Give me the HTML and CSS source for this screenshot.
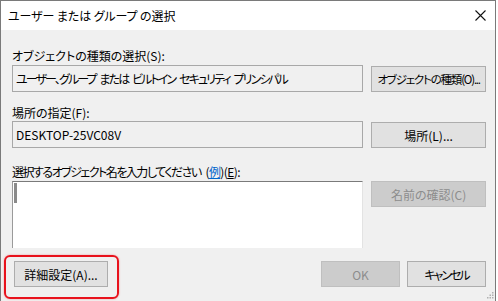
FILE: index.html
```html
<!DOCTYPE html>
<html>
  <head>
    <title>ユーザー または グループ の選択</title>
    <link rel="stylesheet" href="styles.css">
  </head>
  <body>
    <div class="window">
      <div class="titlebar">
        <span class="title">ユーザー または グループ の選択</span>
        <svg class="close" width="11" height="11" viewBox="0 0 11 11">
          <path d="M0.5 0.5 L10.5 10.5 M10.5 0.5 L0.5 10.5" stroke="#111" stroke-width="1.1" fill="none" />
        </svg>
      </div>

      <div class="content">
        <div class="label label-first">オブジェクトの種類の選択(S):</div>
        <div class="row">
          <div class="field field-kana">ユーザー、グループ または ビルトイン セキュリティ プリンシパル</div>
          <button class="btn btn-tight">オブジェクトの種類(O)...</button>
        </div>

        <div class="label">場所の指定(F):</div>
        <div class="row">
          <div class="field">DESKTOP-25VC08V</div>
          <button class="btn">場所(L)...</button>
        </div>

        <div class="label label-third"><span class="label-kana">選択するオブジェクト名を入力してください</span> <span class="label-tail">(<span class="link">例</span>)(<u>E</u>):</span></div>
        <div class="row row-top">
          <div class="textbox"><span class="caret"></span></div>
          <button class="btn" disabled>名前の確認(C)</button>
        </div>

        <div class="footer">
          <button class="btn btn-small">詳細設定(A)...</button>
          <div class="footer-right">
            <button class="btn btn-ok" disabled>OK</button>
            <button class="btn btn-ok btn-kana">キャンセル</button>
          </div>
        </div>
      </div>

      <div class="highlight"></div>
      <svg class="grip" width="7" height="7" viewBox="0 0 7 7">
        <rect x="5" y="0" width="1.5" height="1.5" fill="#b0b0b0" />
        <rect x="2.5" y="2.5" width="1.5" height="1.5" fill="#b0b0b0" />
        <rect x="5" y="2.5" width="1.5" height="1.5" fill="#b0b0b0" />
        <rect x="0" y="5" width="1.5" height="1.5" fill="#b0b0b0" />
        <rect x="2.5" y="5" width="1.5" height="1.5" fill="#b0b0b0" />
        <rect x="5" y="5" width="1.5" height="1.5" fill="#b0b0b0" />
      </svg>
    </div>
  </body>
</html>
```

FILE: styles.css
```css
body {
  margin: 0;
  background-color: #ffffff;
  font-family: "Noto Sans CJK JP", "Noto Sans", sans-serif;
  font-size: 12px;
  font-feature-settings: "palt";
  color: #000;
}
.window {
  position: relative;
  width: 494px;
  height: 300px;
  border: 1px solid #7a7a7a;
  border-bottom: none;
  background-color: #f0f0f0;
}
.titlebar {
  height: 29px;
  background-color: #fff;
  display: flex;
  align-items: center;
  justify-content: space-between;
  padding: 0 9px 0 7px;
}
.title {
  letter-spacing: -0.1px;
}
.content {
  padding: 0 9px 0 11px;
}
.label {
  height: 17px;
  line-height: 17px;
  margin-top: 12px;
}
.label-first {
  margin-top: 17px;
  margin-bottom: 1px;
}
.label-third {
  margin-top: 15px;
  margin-bottom: 1px;
  word-spacing: 2px;
}
.label-kana {
  letter-spacing: -1.5px;
}
.label-tail {
  letter-spacing: -0.6px;
}
.link {
  color: #0066cc;
  text-decoration: underline;
}
.row {
  display: flex;
  align-items: flex-end;
  gap: 8px;
}
.row-top {
  align-items: flex-start;
}
.field {
  box-sizing: border-box;
  width: 352px;
  height: 27px;
  line-height: 25px;
  padding-left: 3px;
  border: 1px solid #a8a8a8;
  background-color: #f0f0f0;
  white-space: nowrap;
  overflow: hidden;
}
.field-kana {
  letter-spacing: -1.9px;
  word-spacing: 3px;
}
.btn {
  box-sizing: border-box;
  width: 115px;
  height: 26px;
  padding: 0;
  border: 1px solid #adadad;
  background-color: #e1e1e1;
  font-family: inherit;
  font-size: 12px;
  font-feature-settings: "palt";
  color: #000;
  white-space: nowrap;
}
.btn:disabled {
  background-color: #cccccc;
  border-color: #bfbfbf;
  color: #8d8d8d;
}
.btn-tight {
  font-size: 11.5px;
  letter-spacing: -1.2px;
}
.btn-kana {
  letter-spacing: -2px;
}
.textbox {
  position: relative;
  box-sizing: border-box;
  width: 352px;
  height: 67px;
  background-color: #fff;
  border-top: 1px solid #7a7a7a;
  border-left: 1px solid #9a9a9a;
  border-right: 1px solid #e3e3e3;
}
.caret {
  position: absolute;
  left: 1px;
  top: 1px;
  width: 3px;
  height: 20px;
  background-color: #8a8a8a;
}
.btn-small {
  width: 94px;
  margin-left: 2px;
}
.btn-ok {
  width: 79px;
}
.footer {
  display: flex;
  justify-content: space-between;
  margin-top: 13px;
}
.footer-right {
  display: flex;
  gap: 7px;
}
.highlight {
  position: absolute;
  left: 3px;
  top: 254px;
  width: 111px;
  height: 40px;
  border: 2px solid #e8121c;
  border-radius: 6px;
  box-shadow: 0 0 2px rgba(232, 18, 28, 0.4);
}
.grip {
  position: absolute;
  right: 1px;
  bottom: 2px;
}
```
